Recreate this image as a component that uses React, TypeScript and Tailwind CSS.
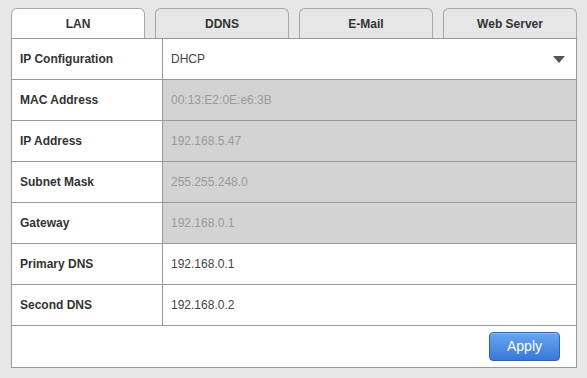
import React from "react";

type Row = { label: string; value: string; disabled?: boolean; select?: boolean };

const rows: Row[] = [
  { label: "IP Configuration", value: "DHCP", select: true },
  { label: "MAC Address", value: "00:13:E2:0E:e6:3B", disabled: true },
  { label: "IP Address", value: "192.168.5.47", disabled: true },
  { label: "Subnet Mask", value: "255.255.248.0", disabled: true },
  { label: "Gateway", value: "192.168.0.1", disabled: true },
  { label: "Primary DNS", value: "192.168.0.1" },
  { label: "Second DNS", value: "192.168.0.2" },
];

const tabs = ["LAN", "DDNS", "E-Mail", "Web Server"];

export default function App() {
  return (
    <div
      className="w-[587px] h-[378px] bg-[#e7e7e7] pl-[11px] pt-[8px]"
      style={{ fontFamily: '"Liberation Sans", Arial, sans-serif' }}
    >
      <div className="w-[566px]">
        {/* Tabs */}
        <div className="grid grid-cols-4 gap-[10px] h-[30px]">
          {tabs.map((t, i) => (
            <div
              key={t}
              className={`flex items-center justify-center rounded-t-[6px] border border-b-0 border-[#a8a8a8] text-[12px] font-bold text-[#333] ${
                i === 0 ? "bg-white" : "bg-[#e6e6e6]"
              }`}
            >
              {t}
            </div>
          ))}
        </div>

        {/* Table */}
        <div className="border border-[#999] bg-white">
          {rows.map((r) => (
            <div key={r.label} className="flex h-[41px] border-b border-[#999]">
              <div className="w-[151px] flex items-center pl-[8px] border-r border-[#999] text-[12px] font-bold text-[#333]">
                {r.label}
              </div>
              <div
                className={`flex-1 flex items-center pl-[8px] pr-[8px] text-[12px] ${
                  r.disabled ? "bg-[#d3d3d3] text-[#9a9a9a]" : "bg-white text-[#444]"
                }`}
              >
                <span className="flex-1">{r.value}</span>
                {r.select && (
                  <svg width="12" height="7" viewBox="0 0 12 7" className="mr-[3px]">
                    <path d="M0 0 L12 0 L6 7 Z" fill="#555" />
                  </svg>
                )}
              </div>
            </div>
          ))}
          <div className="h-[41px] flex items-center justify-end pr-[15px]">
            <button className="w-[71px] h-[29px] mr-[1px] rounded-[4px] border border-[#2f62b3] bg-gradient-to-b from-[#66a6f0] to-[#3a78d9] text-white text-[14px] shadow-[inset_0_1px_0_rgba(255,255,255,0.3)]">
              Apply
            </button>
          </div>
        </div>
      </div>
    </div>
  );
}
